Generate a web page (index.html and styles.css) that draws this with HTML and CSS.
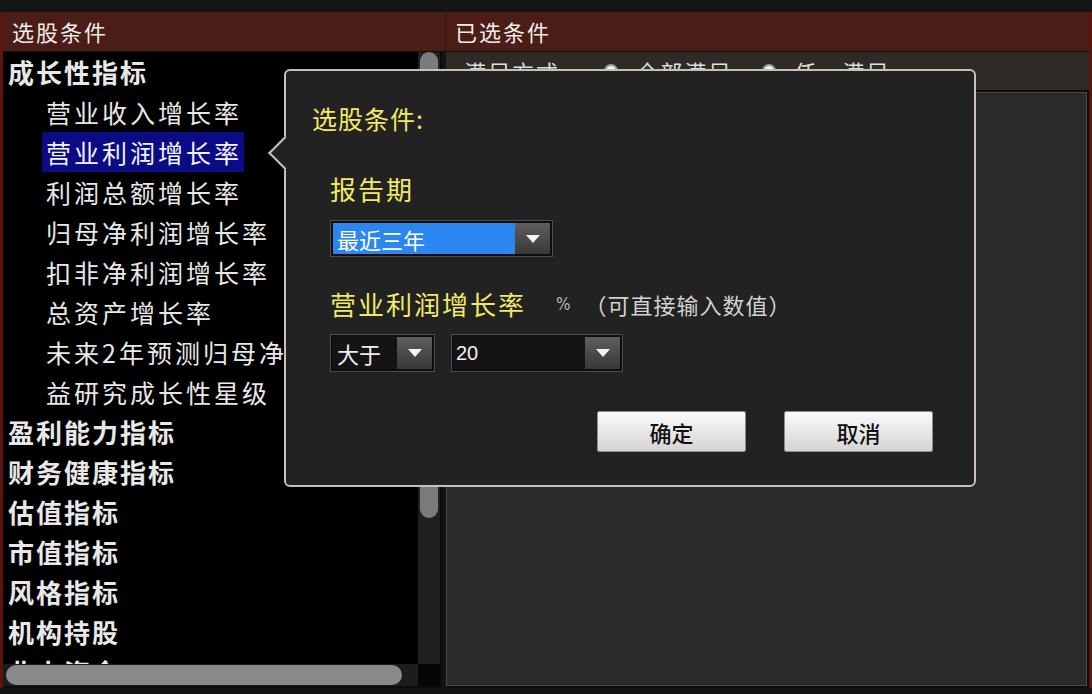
FILE: index.html
```html
<!DOCTYPE html>
<html lang="zh-CN">
<head>
<meta charset="utf-8">
<title>选股条件</title>
<link rel="stylesheet" href="styles.css">
</head>
<body>
<div class="app">
  <div class="topbar"></div>
  <div class="frame">
    <div class="headers">
      <div class="h-left">选股条件</div>
      <div class="h-right">已选条件</div>
    </div>
    <div class="body">
      <div class="left">
        <div class="list-wrap">
          <ul class="tree">
            <li class="cat">成长性指标</li>
            <li class="sub"><span>营业收入增长率</span></li>
            <li class="sub active"><span>营业利润增长率</span></li>
            <li class="sub"><span>利润总额增长率</span></li>
            <li class="sub"><span>归母净利润增长率</span></li>
            <li class="sub"><span>扣非净利润增长率</span></li>
            <li class="sub"><span>总资产增长率</span></li>
            <li class="sub"><span>未来2年预测归母净利润增长率</span></li>
            <li class="sub"><span>益研究成长性星级</span></li>
            <li class="cat">盈利能力指标</li>
            <li class="cat">财务健康指标</li>
            <li class="cat">估值指标</li>
            <li class="cat">市值指标</li>
            <li class="cat">风格指标</li>
            <li class="cat">机构持股</li>
            <li class="cat">北上资金</li>
          </ul>
          <div class="vscroll"><div class="vthumb"></div></div>
        </div>
        <div class="hscroll-row">
          <div class="hscroll"><div class="hthumb"></div></div>
          <div class="corner"></div>
        </div>
      </div>
      <div class="right">
        <div class="mode-row">
          <span class="mode-label">满足方式:</span>
          <span class="radio"></span><span class="mode-opt">全部满足</span>
          <span class="radio"></span><span class="mode-opt">任一满足</span>
        </div>
        <div class="selected-box"></div>
      </div>
    </div>
  </div>
  <div class="bottombar"></div>

  <div class="dialog">
    <div class="dialog-arrow"></div>
    <div class="dlg-title">选股条件:</div>
    <div class="dlg-body">
      <div class="dlg-label">报告期</div>
      <div class="combo combo-period">
        <div class="combo-text selected">最近三年</div>
        <div class="combo-btn"><span class="tri"></span></div>
      </div>
      <div class="dlg-label-row">
        <span class="dlg-label">营业利润增长率</span>
        <span class="unit">%</span>
        <span class="hint">（可直接输入数值）</span>
      </div>
      <div class="combo-row">
        <div class="combo combo-op">
          <div class="combo-text">大于</div>
          <div class="combo-btn"><span class="tri"></span></div>
        </div>
        <div class="combo combo-val">
          <div class="combo-text num">20</div>
          <div class="combo-btn"><span class="tri"></span></div>
        </div>
      </div>
      <div class="btn-row">
        <button class="btn">确定</button>
        <button class="btn">取消</button>
      </div>
    </div>
  </div>
</div>
</body>
</html>
```

FILE: styles.css
```css
* { box-sizing: border-box; }

html, body {
  margin: 0;
  padding: 0;
  background: #121212;
}

body {
  font-family: "Noto Sans CJK SC", "Noto Sans", sans-serif;
  color: #e6e6e6;
}

.app {
  position: relative;
  width: 1092px;
  height: 694px;
  overflow: hidden;
  display: flex;
  flex-direction: column;
  background: #121212;
}

.topbar {
  height: 12px;
  background: #151515;
  flex: none;
}

.bottombar {
  height: 6px;
  background: #141414;
  flex: none;
}

.frame {
  flex: none;
  height: 676px;
  display: flex;
  flex-direction: column;
  border-left: 3px solid #5c1410;
  border-right: 3px solid #5c1410;
  background: #0c0c0c;
}

/* column headers */
.headers {
  height: 40px;
  flex: none;
  display: flex;
  background: #4a1d17;
  border-bottom: 1px solid #1a0a08;
}

.h-left, .h-right {
  font-size: 22px;
  line-height: 39px;
  letter-spacing: 2px;
  color: #f2ece8;
}

.h-left {
  width: 443px;
  padding-left: 9px;
  border-right: 1px solid #3a1510;
}

.h-right {
  padding-left: 9px;
}

.body {
  flex: 1;
  display: flex;
  min-height: 0;
}

/* left tree */
.left {
  width: 443px;
  flex: none;
  display: flex;
  flex-direction: column;
  border-right: 4px solid #141414;
}

.list-wrap {
  height: 612px;
  flex: none;
  display: flex;
  overflow: hidden;
}

.tree {
  list-style: none;
  margin: 0;
  padding: 0;
  width: 415px;
  flex: none;
  background: #000;
  overflow: hidden;
}

.tree li {
  height: 40px;
  line-height: 40px;
  white-space: nowrap;
  font-size: 25px;
  letter-spacing: 3px;
  color: #e8e8e8;
}

.tree .cat {
  padding-left: 5px;
  font-weight: 700;
  font-size: 26px;
  letter-spacing: 2px;
}

.tree .sub {
  padding-left: 39px;
}

.tree .sub span {
  display: inline-block;
  padding: 0 2px 0 4px;
  height: 40px;
}

.tree .sub.active span {
  background: #0b0b86;
  color: #f4f4ff;
}

.vscroll {
  width: 22px;
  flex: none;
  background: #202020;
  padding: 0 2px;
}

.vthumb {
  height: 466px;
  background: #7b7b7b;
  border-radius: 9px;
}

.hscroll-row {
  height: 22px;
  flex: none;
  display: flex;
}

.hscroll {
  width: 415px;
  flex: none;
  background: #1c1c1c;
  padding: 1px 16px 1px 3px;
}

.hthumb {
  height: 20px;
  background: #8a8a8a;
  border-radius: 10px;
}

.corner {
  width: 22px;
  flex: none;
  background: #050505;
}

/* right pane */
.right {
  flex: 1;
  display: flex;
  flex-direction: column;
  padding-bottom: 2px;
}

.mode-row {
  height: 40px;
  flex: none;
  background: #2f2a25;
  display: flex;
  align-items: center;
  padding-left: 18px;
  font-size: 22px;
  color: #dedede;
  letter-spacing: 2px;
  border-bottom: 2px solid #0e0e0e;
}

.mode-label { margin-right: 36px; }

.radio {
  width: 14px;
  height: 14px;
  border-radius: 50%;
  background: #f0f0f0;
  border: 2px solid #9a9a9a;
  margin-right: 18px;
}

.mode-opt { margin-right: 30px; }

.selected-box {
  flex: 1;
  background: #2a2a2a;
  border: 1px solid #4a4a4a;
  margin-right: 2px;
}

/* condition dialog */
.dialog {
  position: absolute;
  left: 284px;
  top: 69px;
  width: 692px;
  height: 418px;
  background: #222222;
  border: 2px solid #c8c0b1;
  border-radius: 6px;
  padding: 32px 41px 0 26px;
}

.dialog-arrow {
  position: absolute;
  left: -13px;
  top: 70px;
  width: 24px;
  height: 24px;
  background: #222222;
  border-left: 2px solid #c8c0b1;
  border-bottom: 2px solid #c8c0b1;
  transform: rotate(45deg);
}

.dlg-title {
  font-size: 25px;
  line-height: 30px;
  color: #f2ea62;
  letter-spacing: 1px;
}

.dlg-body {
  padding-left: 18px;
  display: flex;
  flex-direction: column;
  align-items: flex-start;
}

.dlg-label {
  margin-top: 40px;
  font-size: 26px;
  line-height: 32px;
  color: #f2ea62;
  letter-spacing: 2px;
}

.dlg-label-row {
  margin-top: 31px;
  display: flex;
  align-items: center;
  height: 32px;
}

.dlg-label-row .dlg-label {
  margin-top: 0;
}

.unit {
  margin-left: 30px;
  font-size: 17px;
  color: #b8b8b8;
  font-family: "Liberation Sans Narrow", "DejaVu Sans Condensed", sans-serif;
}

.hint {
  margin-left: 14px;
  font-size: 22px;
  letter-spacing: 1px;
  color: #d2d2d2;
}

.combo {
  display: flex;
  height: 38px;
  border: 1px solid #4c4c4c;
  padding: 2px;
  background: #0e0e0e;
}

.combo-period {
  margin-top: 15px;
  width: 223px;
  height: 37px;
}

.combo-text {
  flex: 1;
  font-size: 22px;
  line-height: 32px;
  padding-left: 4px;
  color: #f0f0f0;
  background: #141414;
  white-space: nowrap;
}

.combo-text.selected {
  background: #2b86f0;
  color: #ffffff;
}

.combo-text.num {
  font-family: "Liberation Sans Narrow", "Liberation Sans", sans-serif;
  font-size: 20px;
  padding-left: 2px;
}

.combo-btn {
  width: 35px;
  flex: none;
  display: flex;
  align-items: center;
  justify-content: center;
  background: linear-gradient(#5e5e5e, #383838);
}

.tri {
  width: 0;
  height: 0;
  border-left: 7px solid transparent;
  border-right: 7px solid transparent;
  border-top: 8px solid #f4f4f4;
}

.combo-row {
  margin-top: 14px;
  display: flex;
  gap: 16px;
}

.combo-op { width: 105px; }
.combo-val { width: 172px; }

.btn-row {
  margin-top: 39px;
  align-self: flex-end;
  display: flex;
  gap: 38px;
}

.btn {
  width: 149px;
  height: 41px;
  font-family: "Noto Sans CJK SC", sans-serif;
  font-size: 22px;
  font-weight: 500;
  color: #111;
  background: linear-gradient(#fbfbfb, #d4d4d4);
  border: 1px solid #8c8c8c;
  border-radius: 2px;
  padding: 0;
}
```
